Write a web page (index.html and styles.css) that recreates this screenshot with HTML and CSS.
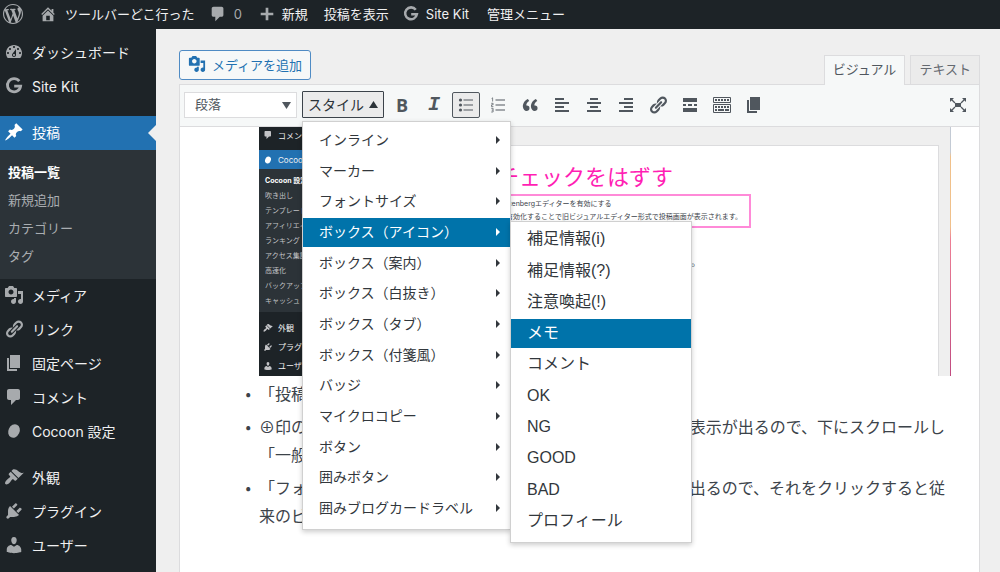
FILE: index.html
```html
<!DOCTYPE html>
<html lang="ja">
<head>
<meta charset="utf-8">
<title>投稿の編集</title>
<link rel="stylesheet" href="styles.css">
</head>
<body>
<svg class="sprite" aria-hidden="true">
  <symbol id="wp" viewBox="0 0 20 20"><path d="M20 10c0-5.51-4.49-10-10-10C4.48 0 0 4.49 0 10c0 5.52 4.48 10 10 10 5.51 0 10-4.48 10-10zM7.78 15.37L4.37 6.22c.55-.02 1.17-.08 1.17-.08.5-.06.44-1.13-.06-1.11 0 0-1.45.11-2.37.11-.18 0-.37 0-.58-.01C4.12 2.69 6.87 1.11 10 1.11c2.33 0 4.45.87 6.05 2.34-.68-.11-1.65.39-1.65 1.58 0 .74.45 1.36.9 2.1.35.61.55 1.36.55 2.46 0 1.49-1.4 5-1.4 5l-3.03-8.37c.54-.02.82-.17.82-.17.5-.05.44-1.25-.06-1.22 0 0-1.44.12-2.38.12-.87 0-2.33-.12-2.33-.12-.5-.03-.56 1.2-.06 1.22l.92.08 1.26 3.41zM17.41 10c.24-.64.74-1.87.43-4.25.7 1.29 1.05 2.71 1.05 4.25 0 3.29-1.73 6.24-4.4 7.78.97-2.59 1.94-5.2 2.92-7.78zM6.1 18.09C3.12 16.65 1.11 13.53 1.11 10c0-1.3.23-2.48.72-3.59C3.25 10.3 4.67 14.2 6.1 18.09zm4.03-6.63l2.58 6.98c-.86.29-1.76.45-2.71.45-.79 0-1.57-.11-2.29-.33.81-2.38 1.62-4.74 2.42-7.1z"/></symbol>
  <symbol id="home" viewBox="0 0 20 20"><path d="M16 8.5l1.53 1.53-1.06 1.06L10 4.6l-6.47 6.49-1.06-1.06L10 2.5l4 4v-2h2v4zm-6-2.46l6 5.99V18H4v-5.97zM12 17v-5H8v5h4z"/></symbol>
  <symbol id="comment" viewBox="0 0 20 20"><path d="M5 2h9c1.1 0 2 .9 2 2v7c0 1.1-.9 2-2 2h-2l-5 5v-5H5c-1.1 0-2-.9-2-2V4c0-1.1.9-2 2-2z"/></symbol>
  <symbol id="plus" viewBox="0 0 20 20"><path d="M17 8.500v3h-5.500v5.500h-3v-5.500H3v-3h5.500V3h3v5.500z"/></symbol>
  <symbol id="google" viewBox="0 0 20 20"><path d="M15.300 5.200A6.600 6.600 0 1 0 16.600 10.200H10.200" fill="none" stroke="currentColor" stroke-width="2.800"/></symbol>
  <symbol id="dashboard" viewBox="0 0 20 20"><path d="M3.760 16h12.480c1.100-1.370 1.760-3.110 1.760-5 0-4.420-3.580-8-8-8s-8 3.580-8 8c0 1.890.66 3.630 1.760 5zM10 4c.55 0 1 .45 1 1s-.45 1-1 1-1-.45-1-1 .45-1 1-1zM6 6c.55 0 1 .45 1 1s-.45 1-1 1-1-.45-1-1 .45-1 1-1zm8 0c.55 0 1 .45 1 1s-.45 1-1 1-1-.45-1-1 .45-1 1-1zm-5.370 5.550L12 7v6c0 1.100-.9 2-2 2s-2-.9-2-2c0-.57.24-1.080.63-1.450zM4 10c.55 0 1 .45 1 1s-.45 1-1 1-1-.45-1-1 .45-1 1-1zm12 0c.55 0 1 .45 1 1s-.45 1-1 1-1-.45-1-1 .45-1 1-1zm-5 3c0-.55-.45-1-1-1s-1 .45-1 1 .45 1 1 1 1-.45 1-1z"/></symbol>
  <symbol id="pin" viewBox="0 0 20 20"><path d="M10.440 3.020l1.820-1.820 6.360 6.350-1.830 1.820c-1.050-.68-2.480-.57-3.410.36l-.75.75c-.92.93-1.040 2.350-.35 3.410l-1.830 1.820-2.410-2.410-2.800 2.790c-.42.42-3.380 2.710-3.800 2.290s1.860-3.390 2.280-3.810l2.790-2.790L4.100 9.360l1.830-1.820c1.050.69 2.480.57 3.400-.36l.75-.75c.93-.92 1.050-2.350.36-3.410z"/></symbol>
  <symbol id="media" viewBox="0 0 20 20"><path d="M13 11V4c0-.55-.45-1-1-1h-1.670L9 1H5L3.670 3H2c-.55 0-1 .45-1 1v7c0 .55.45 1 1 1h10c.55 0 1-.45 1-1zM7 4.500c1.380 0 2.500 1.120 2.500 2.500S8.380 9.500 7 9.500 4.500 8.380 4.500 7 5.620 4.500 7 4.500zM14 6h5v10.500c0 1.380-1.120 2.500-2.500 2.500S14 17.880 14 16.500s1.120-2.500 2.500-2.500c.17 0 .34.02.5.05V9h-3V6zm-4 8.050V13h2v3.500c0 1.380-1.120 2.500-2.500 2.500S7 17.880 7 16.500 8.120 14 9.500 14c.17 0 .34.02.5.05z"/></symbol>
  <symbol id="link" viewBox="0 0 20 20"><path d="M17.740 2.760c1.680 1.690 1.680 4.410 0 6.100l-1.530 1.520c-1.120 1.120-2.700 1.470-4.140 1.090l2.620-2.610.76-.77.76-.76c.84-.84.84-2.200 0-3.040-.84-.85-2.200-.85-3.040 0l-.77.76-3.380 3.380c-.37-1.440-.02-3.020 1.100-4.140l1.520-1.530c1.690-1.680 4.420-1.680 6.100 0zM8.590 13.430l5.340-5.340c.42-.42.42-1.100 0-1.520-.44-.43-1.130-.39-1.530 0l-5.330 5.340c-.42.42-.42 1.100 0 1.520.44.43 1.130.39 1.520 0zm-.76 2.290l4.140-4.150c.38 1.440.03 3.020-1.090 4.140l-1.520 1.530c-1.690 1.680-4.410 1.680-6.100 0-1.680-1.680-1.680-4.420 0-6.100l1.530-1.520c1.120-1.120 2.700-1.470 4.140-1.100l-4.140 4.150c-.85.84-.85 2.200 0 3.050.84.84 2.200.84 3.040 0z"/></symbol>
  <symbol id="page" viewBox="0 0 20 20"><path d="M6 15V2h10v13H6zm-1 1h8v2H3V5h2v11z"/></symbol>
  <symbol id="cocoon" viewBox="0 0 20 20"><ellipse cx="10" cy="10" rx="5.600" ry="7" transform="rotate(25 10 10)"/></symbol>
  <symbol id="brush" viewBox="0 0 20 20"><path d="M14.480 11.060L7.410 3.990l1.500-1.500c.5-.56 2.300-.47 3.510.32 1.210.8 1.430 1.280 2.910 2.100 1.180.64 2.450 1.260 4.450.85zm-.71.71L6.700 4.700 4.930 6.470c-.39.39-.39 1.020 0 1.410l1.060 1.060c.39.39.39 1.030 0 1.420-.6.6-1.430 1.110-2.210 1.690-.35.26-.7.53-1.010.84C1.430 14.230.4 16.080 1.400 17.070c.99 1 2.840-.03 4.180-1.360.31-.31.58-.66.85-1.020.57-.78 1.080-1.610 1.690-2.210.39-.39 1.020-.39 1.410 0l1.060 1.060c.39.39 1.020.39 1.410 0z"/></symbol>
  <symbol id="plug" viewBox="0 0 20 20"><path d="M13.110 4.360L9.870 7.600 8 5.730l3.240-3.240c.35-.34 1.050-.2 1.560.32.52.51.66 1.210.31 1.550zm-8 1.770l.91-1.120 9.010 9.010-1.190.84c-.71.71-2.630 1.160-3.820 1.160H6.140L4.900 17.260c-.59.59-1.540.59-2.120 0-.59-.58-.59-1.530 0-2.120l1.240-1.240v-3.880c0-1.130.4-3.190 1.090-3.890zm7.260 3.970l3.240-3.240c.34-.35 1.040-.21 1.550.31.52.51.66 1.210.31 1.550l-3.240 3.250z"/></symbol>
  <symbol id="user" viewBox="0 0 20 20"><path d="M10 9.250c-2.270 0-2.730-3.440-2.730-3.440C7 4.020 7.820 2 9.970 2c2.160 0 2.980 2.020 2.710 3.810 0 0-.41 3.440-2.680 3.440zm0 2.570L12.720 10c2.390 0 4.520 2.330 4.520 4.530v2.490s-3.650 1.130-7.240 1.130c-3.650 0-7.240-1.130-7.240-1.130v-2.490c0-2.250 1.940-4.480 4.470-4.480z"/></symbol>
  <symbol id="ul" viewBox="0 0 20 20"><circle cx="4.500" cy="5" r="1.600"/><circle cx="4.500" cy="10" r="1.600"/><circle cx="4.500" cy="15" r="1.600"/><path d="M7.500 4.500h9.500v1H7.500zM7.500 9.500h9.500v1H7.500zM7.500 14.500h9.500v1H7.500z"/></symbol>
  <symbol id="ol" viewBox="0 0 20 20"><path d="M7.500 4.500h9.500v1H7.500zM7.500 9.500h9.500v1H7.500zM7.500 14.500h9.500v1H7.500z"/><path d="M3.600 3.500l1-.7V6.500M3.200 8.300h1.900v1.500H3.500v1.800h1.900M3.200 13.300h1.900v3.700H3.200M3.700 15.100h1.400" fill="none" stroke="currentColor" stroke-width=".7"/></symbol>
  <symbol id="quote" viewBox="0 0 20 20"><path d="M9.490 13.220c0-.74-.2-1.380-.61-1.900-.62-.78-1.830-.88-2.530-.72-.29-1.650 1.110-3.750 2.920-4.650L7.880 4c-2.730 1.300-5.420 4.280-4.960 8.050C3.210 14.430 4.590 16 6.540 16c.85 0 1.560-.25 2.120-.75s.83-1.180.83-2.030zm8.050 0c0-.74-.2-1.380-.61-1.900-.63-.78-1.830-.88-2.530-.72-.29-1.650 1.110-3.750 2.920-4.650L15.930 4c-2.730 1.300-5.410 4.280-4.950 8.050.29 2.380 1.660 3.950 3.610 3.950.85 0 1.560-.25 2.120-.75s.83-1.180.83-2.030z"/></symbol>
  <symbol id="left" viewBox="0 0 20 20"><path d="M12 5V3H3v2h9zm5 4V7H3v2h14zm-5 4v-2H3v2h9zm5 4v-2H3v2h14z"/></symbol>
  <symbol id="center" viewBox="0 0 20 20"><path d="M14 5V3H6v2h8zm3 4V7H3v2h14zm-3 4v-2H6v2h8zm3 4v-2H3v2h14z"/></symbol>
  <symbol id="right" viewBox="0 0 20 20"><path d="M17 5V3H8v2h9zm0 4V7H3v2h14zm0 4v-2H8v2h9zm0 4v-2H3v2h14z"/></symbol>
  <symbol id="more" viewBox="0 0 20 20"><path d="M17 7V3H3v4h14zM6 11V9H3v2h3zm6 0V9H8v2h4zm5 0V9h-3v2h3zm0 6v-4H3v4h14z"/></symbol>
  <symbol id="keys" viewBox="0 0 20 20"><path d="M1.500 2.500h17v5h-17zM1.500 9.500h17v8h-17z" fill="none" stroke="currentColor"/><path d="M3 5h14M3 12h14" fill="none" stroke="currentColor" stroke-width="2" stroke-dasharray="2 1"/><path d="M3 15h2M6 15h6M13 15h4" fill="none" stroke="currentColor" stroke-width="2"/></symbol>
  <symbol id="full" viewBox="0 0 20 20"><path d="M7 8h6v4H7zM2 3h4L2 7zM18 3h-4l4 4zM2 17h4l-4-4zM18 17h-4l4-4z"/><path d="M3 4l4 4M17 4l-4 4M3 16l4-4M17 16l-4-4" stroke="currentColor" stroke-width="1.300"/></symbol>
  <symbol id="caret" viewBox="0 0 10 10"><path d="M3 1l4 4-4 4z"/></symbol>
</svg>

<header class="adminbar">
  <a href="#" class="bar-logo" aria-label="WordPress"><svg class="icon"><use href="#wp"/></svg></a>
  <a href="#" class="bar-site"><svg class="icon"><use href="#home"/></svg>ツールバーどこ行った</a>
  <a href="#" class="bar-comments"><svg class="icon"><use href="#comment"/></svg>0</a>
  <a href="#" class="bar-new"><svg class="icon"><use href="#plus"/></svg>新規</a>
  <a href="#">投稿を表示</a>
  <a href="#" class="bar-kit"><svg class="icon"><use href="#google"/></svg>Site Kit</a>
  <a href="#">管理メニュー</a>
</header>

<div class="shell">
  <nav class="sidebar">
    <a href="#"><svg class="icon"><use href="#dashboard"/></svg>ダッシュボード</a>
    <a href="#"><svg class="icon"><use href="#google"/></svg>Site Kit</a>
    <a href="#" class="current gap"><svg class="icon"><use href="#pin"/></svg>投稿</a>
    <div class="subnav">
      <a href="#" class="active">投稿一覧</a>
      <a href="#">新規追加</a>
      <a href="#">カテゴリー</a>
      <a href="#">タグ</a>
    </div>
    <a href="#"><svg class="icon"><use href="#media"/></svg>メディア</a>
    <a href="#"><svg class="icon"><use href="#link"/></svg>リンク</a>
    <a href="#"><svg class="icon"><use href="#page"/></svg>固定ページ</a>
    <a href="#"><svg class="icon"><use href="#comment"/></svg>コメント</a>
    <a href="#"><svg class="icon"><use href="#cocoon"/></svg>Cocoon 設定</a>
    <a href="#" class="gap"><svg class="icon"><use href="#brush"/></svg>外観</a>
    <a href="#"><svg class="icon"><use href="#plug"/></svg>プラグイン</a>
    <a href="#"><svg class="icon"><use href="#user"/></svg>ユーザー</a>
  </nav>

  <main class="main">
    <div class="editor-top">
      <button type="button" class="add-media"><svg class="icon"><use href="#media"/></svg>メディアを追加</button>
      <div class="tabs">
        <button type="button" class="tab selected">ビジュアル</button>
        <button type="button" class="tab">テキスト</button>
      </div>
    </div>

    <section class="editor">
      <div class="toolbar">
        <div class="format">
          <select aria-label="書式"><option>段落</option></select>
          <svg class="arrow" viewBox="0 0 10 10"><path d="M0 1h10L5 9z"/></svg>
        </div>
        <div class="style-wrap">
          <button type="button" class="style-btn" aria-expanded="true">スタイル<svg class="arrow" viewBox="0 0 10 10"><path d="M0 9h10L5 1z"/></svg></button>
          <ul class="menu">
            <li><button type="button">インライン<svg><use href="#caret"/></svg></button></li>
            <li><button type="button">マーカー<svg><use href="#caret"/></svg></button></li>
            <li><button type="button">フォントサイズ<svg><use href="#caret"/></svg></button></li>
            <li class="open"><button type="button" class="on">ボックス（アイコン）<svg><use href="#caret"/></svg></button>
              <ul class="menu submenu">
                <li><button type="button">補足情報(i)</button></li>
                <li><button type="button">補足情報(?)</button></li>
                <li><button type="button">注意喚起(!)</button></li>
                <li><button type="button" class="on">メモ</button></li>
                <li><button type="button">コメント</button></li>
                <li><button type="button">OK</button></li>
                <li><button type="button">NG</button></li>
                <li><button type="button">GOOD</button></li>
                <li><button type="button">BAD</button></li>
                <li><button type="button">プロフィール</button></li>
              </ul>
            </li>
            <li><button type="button">ボックス（案内）<svg><use href="#caret"/></svg></button></li>
            <li><button type="button">ボックス（白抜き）<svg><use href="#caret"/></svg></button></li>
            <li><button type="button">ボックス（タブ）<svg><use href="#caret"/></svg></button></li>
            <li><button type="button">ボックス（付箋風）<svg><use href="#caret"/></svg></button></li>
            <li><button type="button">バッジ<svg><use href="#caret"/></svg></button></li>
            <li><button type="button">マイクロコピー<svg><use href="#caret"/></svg></button></li>
            <li><button type="button">ボタン<svg><use href="#caret"/></svg></button></li>
            <li><button type="button">囲みボタン<svg><use href="#caret"/></svg></button></li>
            <li><button type="button">囲みブログカードラベル<svg><use href="#caret"/></svg></button></li>
          </ul>
        </div>
        <button type="button" class="tool bold">B</button>
        <button type="button" class="tool italic">I</button>
        <button type="button" class="tool pressed" aria-label="番号なしリスト"><svg class="icon"><use href="#ul"/></svg></button>
        <button type="button" class="tool" aria-label="番号付きリスト"><svg class="icon"><use href="#ol"/></svg></button>
        <button type="button" class="tool" aria-label="引用"><svg class="icon"><use href="#quote"/></svg></button>
        <button type="button" class="tool" aria-label="左寄せ"><svg class="icon"><use href="#left"/></svg></button>
        <button type="button" class="tool" aria-label="中央揃え"><svg class="icon"><use href="#center"/></svg></button>
        <button type="button" class="tool" aria-label="右寄せ"><svg class="icon"><use href="#right"/></svg></button>
        <button type="button" class="tool" aria-label="リンク"><svg class="icon"><use href="#link"/></svg></button>
        <button type="button" class="tool" aria-label="続きを読む"><svg class="icon"><use href="#more"/></svg></button>
        <button type="button" class="tool" aria-label="ツールバー切り替え"><svg class="icon"><use href="#keys"/></svg></button>
        <button type="button" class="tool" aria-label="複製"><svg class="icon"><use href="#page"/></svg></button>
        <button type="button" class="tool fullscreen" aria-label="集中執筆モード"><svg class="icon"><use href="#full"/></svg></button>
      </div>

      <div class="content">
        <figure class="shot">
          <div class="mini-nav">
            <span class="mini-item"><svg><use href="#comment"/></svg>コメント</span>
            <span class="mini-item mini-current"><svg><use href="#cocoon"/></svg>Cocoon</span>
            <div class="mini-sub">
              <b>Cocoon 設定</b>
              <span>吹き出し</span>
              <span>テンプレート</span>
              <span>アフィリエイト</span>
              <span>ランキング</span>
              <span>アクセス集計</span>
              <span>高速化</span>
              <span>バックアップ</span>
              <span>キャッシュ</span>
            </div>
            <span class="mini-item"><svg><use href="#brush"/></svg>外観</span>
            <span class="mini-item"><svg><use href="#plug"/></svg>プラグイン</span>
            <span class="mini-item"><svg><use href="#user"/></svg>ユーザー</span>
          </div>
          <div class="mini-body">
            <div class="mini-panel">
              <p class="note">チェックをはずす</p>
              <div class="note-box">
                <p>Gutenbergエディターを有効にする</p>
                <p class="second">有効化することで旧ビジュアルエディター形式で投稿画面が表示されます。</p>
              </div>
              <p class="tail">。</p>
            </div>
          </div>
          <div class="edge"></div>
        </figure>
        <ul class="steps">
          <li>「投稿</li>
          <li><span class="line"><span>⊕印の</span><span>表示が出るので、下にスクロールし</span></span>「一般</li>
          <li><span class="line"><span>「フォ</span><span>出るので、それをクリックすると従</span></span>来のビ</li>
        </ul>
      </div>
    </section>
  </main>
</div>
</body>
</html>
```

FILE: styles.css
```css
* { box-sizing: border-box; }

body {
  margin: 0;
  height: 100vh;
  overflow: hidden;
  display: flex;
  flex-direction: column;
  background: #efefef;
  color: #3c434a;
  font-family: Inter, "Noto Sans CJK JP", sans-serif;
  font-size: 14px;
}

button, select { font: inherit; color: inherit; margin: 0; }
ul, p, figure { margin: 0; padding: 0; }
a { color: inherit; text-decoration: none; }
svg { fill: currentColor; flex: none; }

.sprite { position: absolute; width: 0; height: 0; }
.icon { width: 20px; height: 20px; color: #a7aaad; }
.arrow { width: 9px; height: 9px; }

/* Admin bar */
.adminbar {
  flex: none;
  height: 29px;
  display: flex;
  align-items: center;
  gap: 16px;
  padding: 0 0 2px 3px;
  background: #1d2327;
  color: #f0f0f1;
  font-size: 13px;
  white-space: nowrap;
}
.adminbar a { display: flex; align-items: center; gap: 6px; }
.adminbar .icon { width: 18px; height: 18px; }
.adminbar .bar-logo .icon { width: 20px; height: 20px; }
.adminbar .bar-site { gap: 8px; }
.adminbar .bar-comments { margin-left: -3px; color: #a7aaad; }
.adminbar .bar-comments .icon { width: 20px; }
.adminbar .bar-kit { margin: 0 2px 0 -3px; }

/* Sidebar */
.shell { flex: 1; min-height: 0; display: flex; }
.sidebar {
  flex: none;
  width: 156px;
  padding-top: 7px;
  background: #1d2327;
  color: #f0f0f1;
  overflow: hidden;
}
.sidebar > a {
  display: flex;
  align-items: center;
  gap: 8px;
  height: 34px;
  padding: 0 0 2px 4px;
}
.sidebar .gap { margin-top: 12px; }
.sidebar .current {
  position: relative;
  background: #2271b1;
  color: #fff;
}
.sidebar .current .icon { color: #fff; }
.sidebar .current::after {
  content: "";
  position: absolute;
  right: 0;
  top: 9px;
  border: 8px solid transparent;
  border-right-color: #efefef;
  border-left-width: 0;
}
.subnav {
  padding: 8px 0 9px;
  background: #2c3338;
  color: #a9adb1;
  font-size: 13px;
}
.subnav a { display: block; padding-left: 8px; line-height: 28px; }
.subnav .active { color: #fff; font-weight: 700; }

/* Editor header */
.main {
  flex: 1;
  min-width: 0;
  display: flex;
  flex-direction: column;
  padding: 21px 20px 0 23px;
}
.editor-top {
  display: flex;
  justify-content: space-between;
  align-items: flex-start;
  height: 34px;
}
.add-media {
  display: flex;
  align-items: center;
  gap: 6px;
  height: 30px;
  padding: 0 8px 2px;
  border: 1px solid #4f8bc4;
  border-radius: 3px;
  background: #f6f8f8;
  color: #2271b1;
  font-size: 13px;
}
.add-media .icon { color: #2271b1; width: 18px; height: 18px; }
.tabs { display: flex; gap: 5px; align-self: flex-end; }
.tab {
  height: 29px;
  padding: 0 8px 4px;
  border: 1px solid #dcdcde;
  border-bottom: 0;
  background: #ebebeb;
  color: #646970;
  font-size: 13px;
}
.tab.selected {
  position: relative;
  height: 30px;
  margin-bottom: -1px;
  background: #f6f8f8;
  color: #50575e;
}

/* Editor */
.editor {
  flex: 1;
  min-height: 0;
  display: flex;
  flex-direction: column;
  border: 1px solid #dcdcde;
  border-bottom: 0;
  background: #fff;
}
.toolbar {
  flex: none;
  display: flex;
  align-items: center;
  gap: 4px;
  height: 42px;
  padding: 0 7px 2px 4px;
  border-bottom: 1px solid #dcdcde;
  background: #f6f8f8;
  color: #50575e;
}
.format { position: relative; width: 113px; margin-right: 1px; }
.format select {
  appearance: none;
  width: 100%;
  height: 26px;
  padding: 0 10px 2px;
  border: 1px solid #dcdcde;
  border-radius: 0;
  background: #fff;
  font-size: 13px;
}
.format .arrow { position: absolute; right: 6px; top: 9px; pointer-events: none; }

.style-wrap { position: relative; }
.style-btn {
  display: flex;
  align-items: center;
  gap: 5px;
  width: 82px;
  height: 27px;
  padding: 0 5px 1px;
  border: 1px solid #3c434a;
  border-radius: 1px;
  background: #ebebeb;
  color: #2c3338;
  font-size: 14px;
  white-space: nowrap;
}

.tool {
  display: grid;
  place-items: center;
  width: 28px;
  height: 26px;
  padding: 0;
  border: 1px solid transparent;
  border-radius: 2px;
  background: none;
}
.tool .icon { color: #50575e; }
.tool.pressed { border-color: #50575e; background: #ebebeb; }
.tool.bold { font: 700 18px/20px "Open Sans", sans-serif; }
.tool.italic { font: italic 700 20px/20px "Liberation Mono", monospace; }
.fullscreen { margin-left: auto; }

/* Drop-down menus */
.menu {
  position: absolute;
  z-index: 2;
  left: 0;
  top: calc(100% + 3px);
  display: flex;
  flex-direction: column;
  gap: 2px;
  width: 209px;
  min-height: 409px;
  padding: 4px 0 6px;
  border: 1px solid #d0d0d0;
  background: #fff;
  box-shadow: 0 2px 5px rgba(0, 0, 0, .2);
  list-style: none;
}
.menu li { flex: 1 1 0; display: flex; }
.menu button {
  flex: 1;
  display: flex;
  align-items: center;
  justify-content: space-between;
  padding: 0 7px 1px 16px;
  border: 0;
  background: none;
  color: #32373c;
  line-height: 20px;
  text-align: left;
  white-space: nowrap;
}
.menu button svg { width: 10px; height: 10px; }
.menu .on { background: #0073aa; color: #fff; }
.menu .open { position: relative; }
.submenu {
  left: 100%;
  top: 3px;
  width: 182px;
  min-height: 322px;
  padding-top: 3px;
  font-family: "Liberation Sans", "Noto Sans CJK JP", sans-serif;
  font-size: 16px;
}

/* Post content */
.content { flex: 1; min-height: 0; overflow: hidden; padding: 0 28px 0 79px; }
.shot { display: flex; height: 249px; overflow: hidden; }
.mini-nav {
  flex: none;
  width: 64px;
  background: #1d2327;
  color: #f0f0f1;
  font-size: 8px;
  white-space: nowrap;
  overflow: hidden;
}
.mini-item {
  display: flex;
  align-items: center;
  gap: 5px;
  height: 19px;
  padding-left: 4px;
}
.mini-item svg { width: 10px; height: 10px; color: #c3c4c7; }
.mini-item:first-child { height: 16px; margin-bottom: 7px; }
.mini-current { background: #2271b1; }
.mini-current svg { color: #fff; }
.mini-sub {
  display: flex;
  flex-direction: column;
  margin-bottom: 6px;
  padding: 4px 0 4px 6px;
  background: #2c3338;
  color: #c3c4c7;
  font-size: 7px;
  line-height: 15px;
}
.mini-sub b { color: #fff; }
.mini-body { flex: 1; min-width: 0; padding: 18px 11px 0 16px; background: #efefef; }
.mini-panel {
  height: 100%;
  padding: 17px 0 0 151px;
  border: 1px solid #dcdcde;
  border-bottom: 0;
  background: #fff;
}
.note { padding-left: 6px; color: #ff1fb4; font-size: 22px; line-height: 28px; white-space: nowrap; }
.note-box {
  width: 260px;
  height: 34px;
  margin-top: 3px;
  padding: 1px 7px;
  border: 2px solid #ff8ad8;
  font-size: 7px;
  line-height: 13px;
  white-space: nowrap;
}
.note-box .second { text-align: right; }
.tail { margin-top: 26px; padding-left: 200px; font-size: 10px; line-height: 16px; }
.edge { width: 1px; background: linear-gradient(#c3cad4 10%, #f0c08a 12% 40%, #ee7f95 45%, #c04a80); }

.steps {
  padding-top: 3px;
  font-family: "Noto Sans CJK JP", sans-serif;
  font-size: 16px;
  line-height: 28px;
  list-style-type: "•\2002";
}
.steps li { margin-bottom: 5px; }
.line { display: flex; justify-content: space-between; padding-right: 6px; white-space: nowrap; }
```
